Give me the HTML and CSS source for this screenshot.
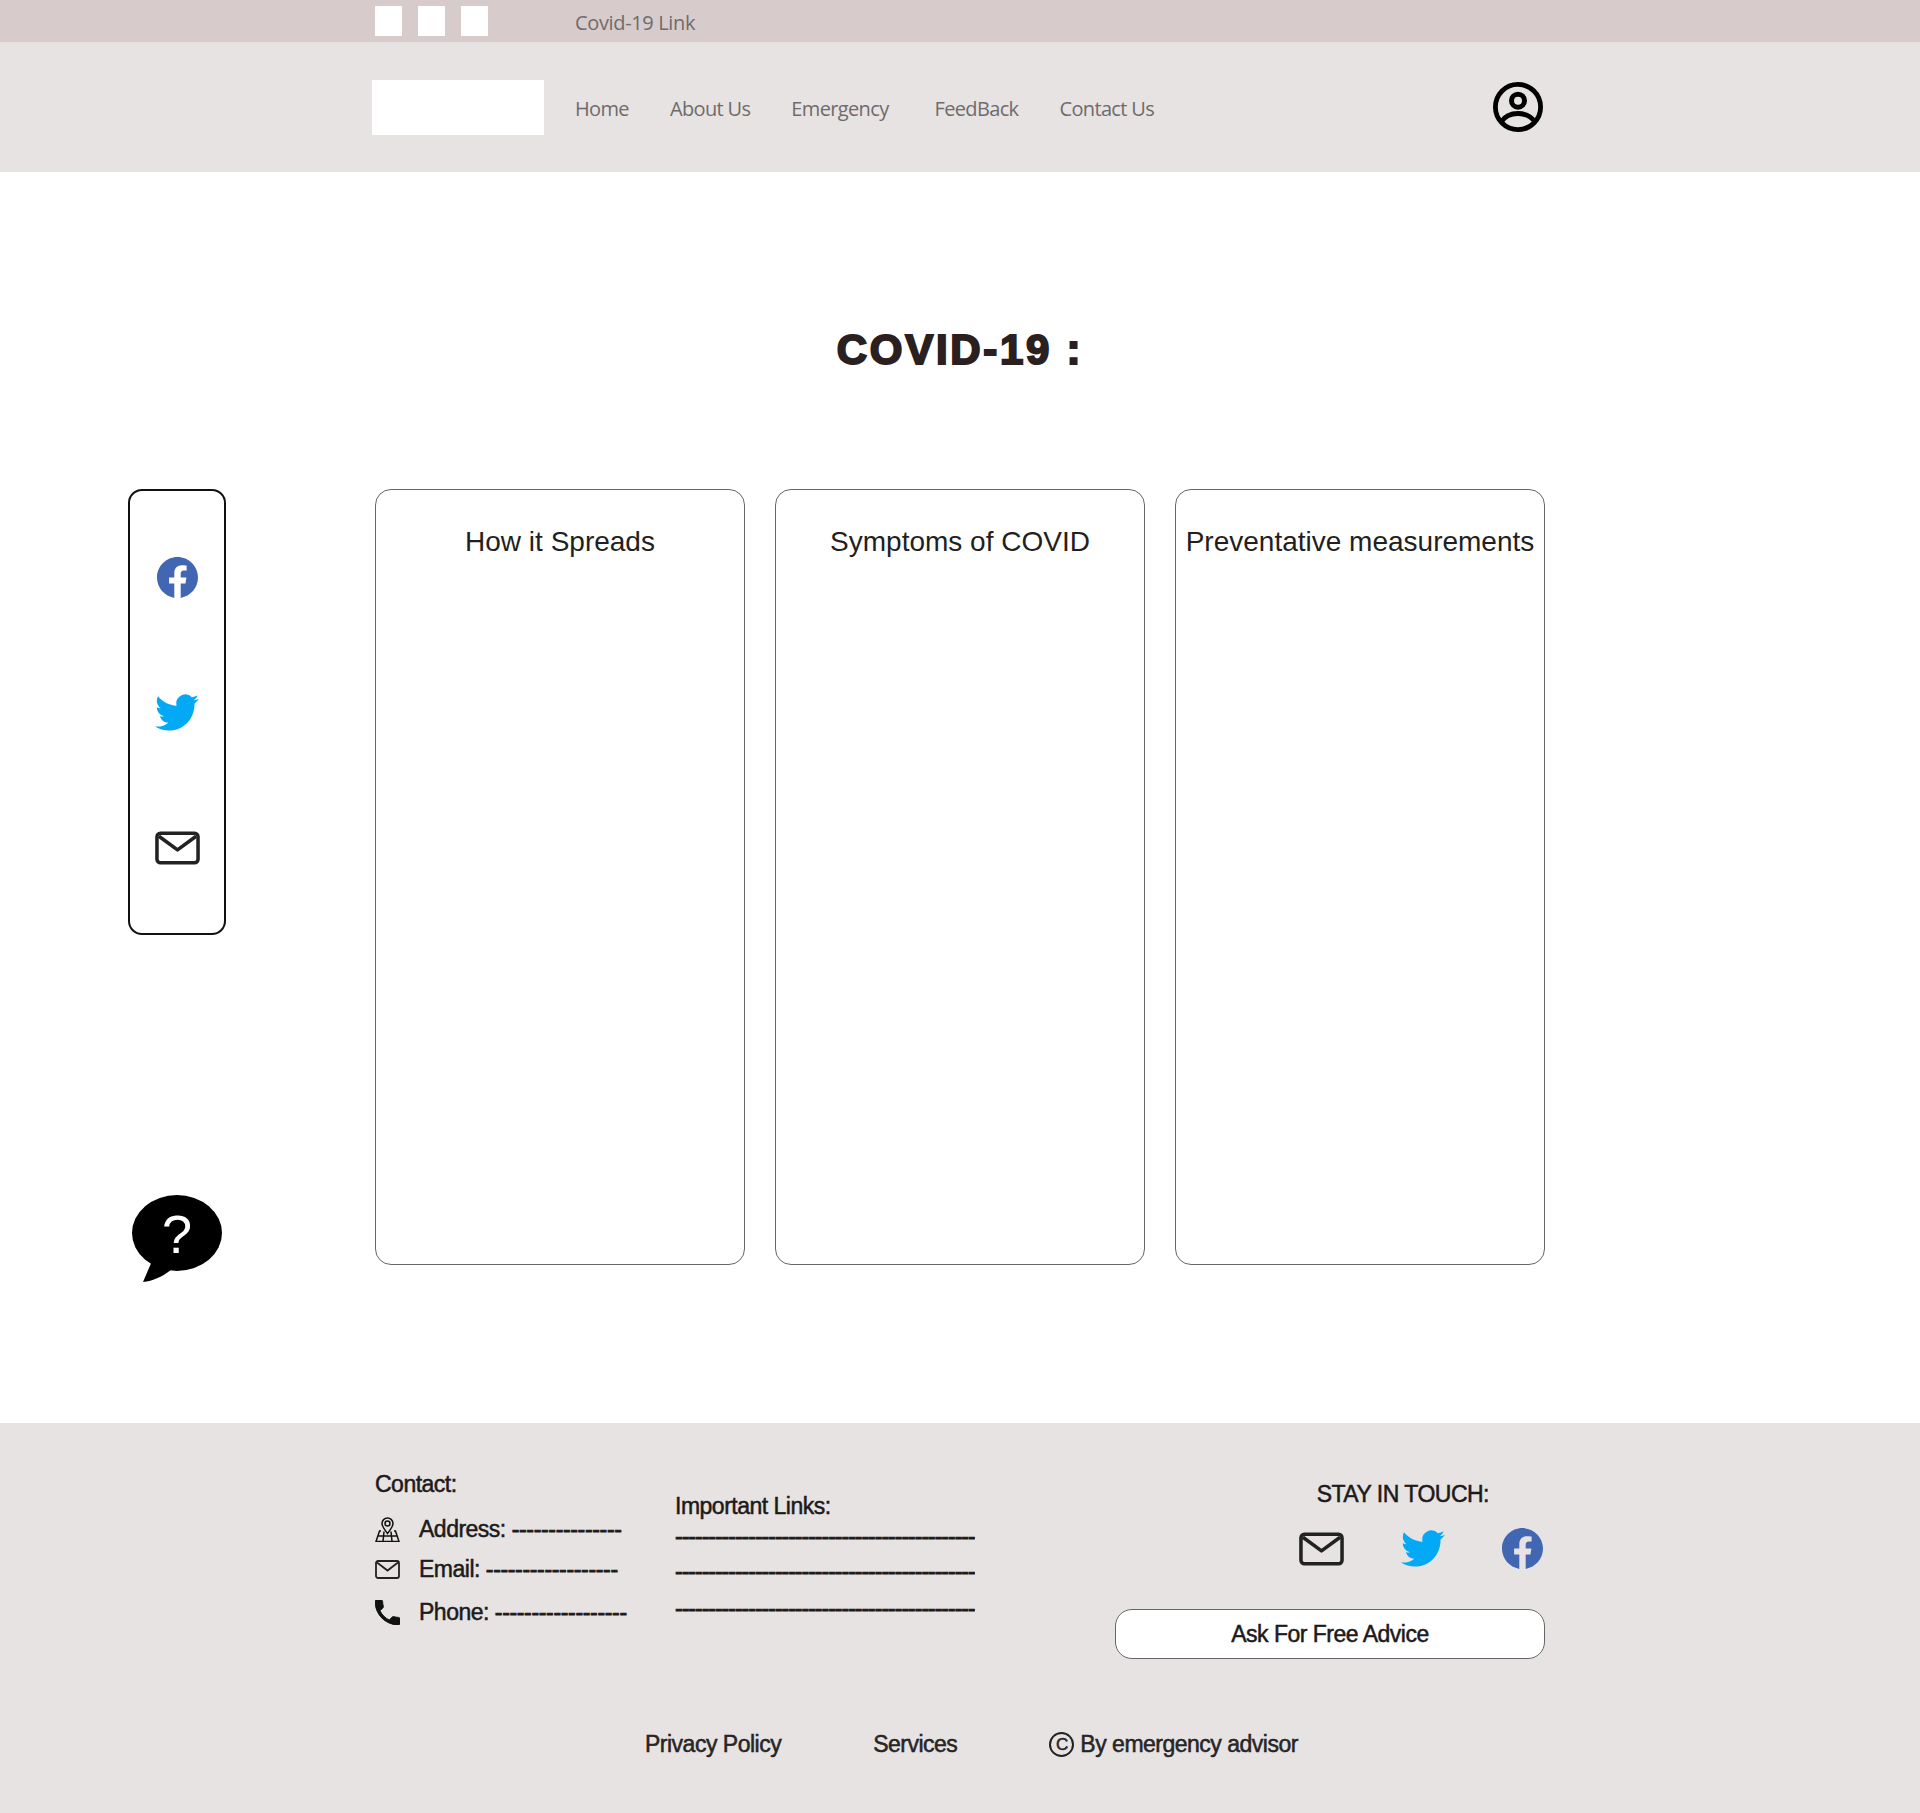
FILE: index.html
```html
<!DOCTYPE html>
<html lang="en">
<head>
    <meta charset="UTF-8">
    <title>Covid-19</title>
    <link rel="stylesheet" href="styles.css">
</head>
<body>

<svg class="defs" width="0" height="0">
    <symbol id="i-fb" viewBox="0 0 24 24">
        <path fill="#4267b2" d="M24 12.073c0-6.627-5.373-12-12-12s-12 5.373-12 12c0 5.99 4.388 10.954 10.125 11.854v-8.385H7.078v-3.47h3.047V9.43c0-3.007 1.792-4.669 4.533-4.669 1.312 0 2.686.235 2.686.235v2.953H15.83c-1.491 0-1.956.925-1.956 1.874v2.25h3.328l-.532 3.47h-2.796v8.385C19.612 23.027 24 18.062 24 12.073z"/>
    </symbol>
    <symbol id="i-tw" viewBox="0 0 24 20" preserveAspectRatio="none">
        <path fill="#03a9f4" d="M23.953 2.57a10 10 0 01-2.825.775 4.958 4.958 0 002.163-2.723c-.951.555-2.005.959-3.127 1.184a4.92 4.92 0 00-8.384 4.482C7.69 6.095 4.067 4.13 1.64 1.162a4.822 4.822 0 00-.666 2.475c0 1.71.87 3.213 2.188 4.096a4.904 4.904 0 01-2.228-.616v.06a4.923 4.923 0 003.946 4.827 4.996 4.996 0 01-2.212.085 4.936 4.936 0 004.604 3.417 9.867 9.867 0 01-6.102 2.105c-.39 0-.779-.023-1.17-.067a13.995 13.995 0 007.557 2.209c9.053 0 13.998-7.496 13.998-13.985 0-.21 0-.42-.015-.63A9.935 9.935 0 0024 2.59z"/>
    </symbol>
    <symbol id="i-mail" viewBox="0 0 46 34">
        <rect x="2" y="2" width="42" height="30" rx="3.5" fill="none" stroke="#222" stroke-width="3.6"/>
        <path d="M4 5l19 14L42 5" fill="none" stroke="#222" stroke-width="3.6" stroke-linejoin="round"/>
    </symbol>
</svg>

<div class="topbar">
    <div class="squares">
        <span class="square"></span>
        <span class="square"></span>
        <span class="square"></span>
    </div>
    <a class="toplink">Covid-19 Link</a>
</div>

<header class="nav">
    <div class="logo"></div>
    <nav class="menu">
        <a>Home</a>
        <a>About Us</a>
        <a class="menu-wide">Emergency</a>
        <a>FeedBack</a>
        <a>Contact Us</a>
    </nav>
    <svg class="user" viewBox="0 0 50 50">
        <circle cx="25" cy="25" r="22.6" fill="none" stroke="#000" stroke-width="4.8"/>
        <circle cx="25" cy="18.7" r="6.5" fill="none" stroke="#000" stroke-width="5"/>
        <path d="M8 40c4-6 10.500-8.500 17-8.500S38 34 42 40" fill="none" stroke="#000" stroke-width="4.800"/>
    </svg>
</header>

<main class="content">
    <h1 class="heading">COVID-19 :</h1>
    <div class="row">
        <aside class="side">
            <div class="rail">
                <svg class="ic-fb"><use href="#i-fb"/></svg>
                <svg class="ic-tw"><use href="#i-tw"/></svg>
                <svg class="ic-mail"><use href="#i-mail"/></svg>
            </div>
            <svg class="bubble" viewBox="0 0 90 87">
                <ellipse cx="45" cy="38" rx="45" ry="38" fill="#000"/>
                <path d="M20 66L11 87c10-1 21-6 29-13z" fill="#000"/>
                <text class="bubble-mark" x="45" y="58" text-anchor="middle">?</text>
            </svg>
        </aside>
        <section class="cards">
            <div class="card"><h2>How it Spreads</h2></div>
            <div class="card"><h2>Symptoms of COVID</h2></div>
            <div class="card"><h2>Preventative measurements</h2></div>
        </section>
    </div>
</main>

<footer class="footer">
    <div class="footer-top">
        <div class="contact">
            <h3>Contact:</h3>
            <div class="contact-row row-address">
                <svg class="small-ic" viewBox="0 0 25 25">
                    <g fill="none" stroke="#111" stroke-width="1.500">
                        <path d="M12.500 16.500C9 11.500 7 9.500 7 6.500a5.500 5.500 0 0 1 11 0c0 3-2 5-5.500 10z"/>
                        <circle cx="12.500" cy="6.500" r="2.500"/>
                        <path d="M6 14H4.500L1 24.500h23L20.500 14H19M2.800 19h19.400M9 14.500l-1 10M16 14.500l1 10"/>
                    </g>
                </svg>
                <span>Address: <span class="dash">---------------</span></span>
            </div>
            <div class="contact-row row-email">
                <svg class="small-ic" viewBox="0 0 25 19">
                    <rect x="1" y="1" width="23" height="17" rx="2" fill="none" stroke="#222" stroke-width="1.800"/>
                    <path d="M2 2.500l10.500 8 10.500-8" fill="none" stroke="#222" stroke-width="1.800"/>
                </svg>
                <span>Email: <span class="dash">------------------</span></span>
            </div>
            <div class="contact-row row-phone">
                <svg class="small-ic" viewBox="3 3 18 18"><path fill="#111" stroke="#111" stroke-width="0.6" d="M6.620 10.790c1.440 2.830 3.760 5.140 6.590 6.590l2.200-2.200c.27-.27.67-.36 1.020-.24 1.120.37 2.330.57 3.570.57.55 0 1 .45 1 1V20c0 .55-.45 1-1 1-9.390 0-17-7.610-17-17 0-.55.45-1 1-1h3.500c.55 0 1 .45 1 1 0 1.250.2 2.450.57 3.570.11.35.03.74-.25 1.020l-2.200 2.200z"/></svg>
                <span>Phone: <span class="dash">------------------</span></span>
            </div>
        </div>
        <div class="links">
            <h3>Important Links:</h3>
            <div class="link-line l1">---------------------------------------------</div>
            <div class="link-line l2">---------------------------------------------</div>
            <div class="link-line l3">---------------------------------------------</div>
        </div>
        <div class="touch">
            <h3>STAY IN TOUCH:</h3>
            <div class="touch-icons">
                <svg class="ic-mail"><use href="#i-mail"/></svg>
                <svg class="ic-tw"><use href="#i-tw"/></svg>
                <svg class="ic-fb"><use href="#i-fb"/></svg>
            </div>
            <button class="advice">Ask For Free Advice</button>
        </div>
    </div>
    <div class="footer-bottom">
        <a>Privacy Policy</a>
        <a>Services</a>
        <span class="copy"><span class="copy-mark">C</span>By emergency advisor</span>
    </div>
</footer>

</body>
</html>
```

FILE: styles.css
```css
* {
    box-sizing: border-box;
}

body {
    margin: 0;
    font-family: "Liberation Sans", Arial, sans-serif;
    background-color: #fff;
    color: #231f20;
}

.defs {
    display: block;
    height: 0;
}

/* top strip */
.topbar {
    height: 42px;
    background-color: #d7cbcb;
    display: flex;
    align-items: center;
    padding-left: 375px;
}

.squares {
    display: flex;
    gap: 16px;
    width: 200px;
}

.square {
    width: 27px;
    height: 30px;
    background-color: #fff;
}

.toplink,
.menu a {
    font-family: "Open Sans", sans-serif;
    font-size: 20px;
    letter-spacing: -0.35px;
    color: #6f6b6b;
}

.menu a {
    letter-spacing: -0.65px;
}

.toplink {
    padding-top: 3px;
}

/* main nav */
.nav {
    height: 130px;
    background-color: #e7e3e3;
    display: flex;
    align-items: center;
    padding-left: 372px;
    padding-right: 377px;
}

.logo {
    width: 172px;
    height: 55px;
    margin-top: 1px;
    background-color: #fff;
}

.menu {
    display: flex;
    gap: 41px;
    margin-left: 31px;
    padding-top: 3px;
}

.menu-wide {
    margin-right: 5px;
}

.user {
    width: 50px;
    height: 50px;
    margin-left: auto;
    margin-top: -1px;
}

/* content */
.content {
    height: 1251px;
}

.heading {
    margin: 0;
    padding-top: 153px;
    height: 317px;
    text-align: center;
    font-size: 42px;
    line-height: 50px;
    font-weight: 700;
    letter-spacing: 2.7px;
    color: #2a2020;
    -webkit-text-stroke: 2px #2a2020;
}

.row {
    display: flex;
    padding-left: 128px;
}

.side {
    width: 247px;
    display: flex;
    flex-direction: column;
    align-items: flex-start;
}

.rail {
    width: 98px;
    height: 446px;
    border: 2px solid #111;
    border-radius: 14px;
    display: flex;
    flex-direction: column;
    align-items: center;
    padding-top: 66px;
}

.ic-fb {
    width: 41px;
    height: 41px;
}

.ic-tw {
    width: 44px;
    height: 37px;
}

.ic-mail {
    width: 45px;
    height: 34px;
}

.rail .ic-tw {
    margin-top: 96px;
}

.rail .ic-mail {
    margin-top: 100px;
}

.bubble {
    width: 90px;
    height: 87px;
    margin-top: 260px;
    margin-left: 4px;
}

.bubble-mark {
    font-size: 54px;
    fill: #fff;
}

.cards {
    display: flex;
    gap: 30px;
}

.card {
    width: 370px;
    height: 776px;
    border: 1px solid #666;
    border-radius: 16px;
    padding-top: 34px;
    text-align: center;
}

.card h2 {
    margin: 0;
    font-size: 28px;
    line-height: 36px;
    font-weight: 400;
    white-space: nowrap;
}

/* footer */
.footer {
    height: 390px;
    background-color: #e7e3e3;
    padding-left: 375px;
    padding-right: 375px;
    font-size: 23px;
    letter-spacing: -0.5px;
    color: #1c1a1a;
    -webkit-text-stroke: 0.5px #1c1a1a;
}

.footer h3 {
    margin: 0;
    font-size: 23px;
    line-height: 26px;
    font-weight: 400;
}

.footer-top {
    display: flex;
    height: 282px;
}

.contact {
    width: 300px;
    padding-top: 48px;
}

.contact-row {
    display: flex;
    align-items: center;
    gap: 19px;
    line-height: 26px;
}

.row-address {
    margin-top: 19px;
}

.row-email {
    margin-top: 14px;
}

.row-phone {
    margin-top: 17px;
}

.small-ic {
    width: 25px;
    height: 25px;
    flex: none;
}

.dash {
    letter-spacing: -0.33px;
    -webkit-text-stroke: 0.8px #1c1a1a;
}

.links {
    width: 380px;
    padding-top: 70px;
}

.link-line {
    width: 300px;
    overflow: hidden;
    white-space: nowrap;
    line-height: 26px;
    letter-spacing: -1px;
    -webkit-text-stroke: 0.8px #1c1a1a;
}

.l1 {
    margin-top: 4px;
}

.l2 {
    margin-top: 9px;
}

.l3 {
    margin-top: 11px;
}

.touch {
    flex: 1;
    padding-top: 58px;
    display: flex;
    flex-direction: column;
    align-items: flex-end;
}

.touch h3 {
    margin-right: 56px;
}

.touch-icons {
    display: flex;
    align-items: center;
    gap: 57px;
    margin-top: 21px;
    margin-right: 2px;
}

.advice {
    margin-top: 40px;
    width: 430px;
    height: 50px;
    background-color: #fff;
    border: 1px solid #666;
    border-radius: 17px;
    font-family: inherit;
    font-size: 23px;
    letter-spacing: -0.5px;
    color: #1c1a1a;
    -webkit-text-stroke: 0.5px #1c1a1a;
}

.footer-bottom {
    display: flex;
    align-items: center;
    padding-left: 270px;
    padding-top: 26px;
    color: #2b2828;
}

.footer-bottom a {
    margin-right: 92px;
}

.copy {
    display: flex;
    align-items: center;
    gap: 6px;
}

.copy-mark {
    width: 25px;
    height: 25px;
    border: 2px solid #222;
    border-radius: 50%;
    font-size: 17px;
    line-height: 21px;
    text-align: center;
}
```
